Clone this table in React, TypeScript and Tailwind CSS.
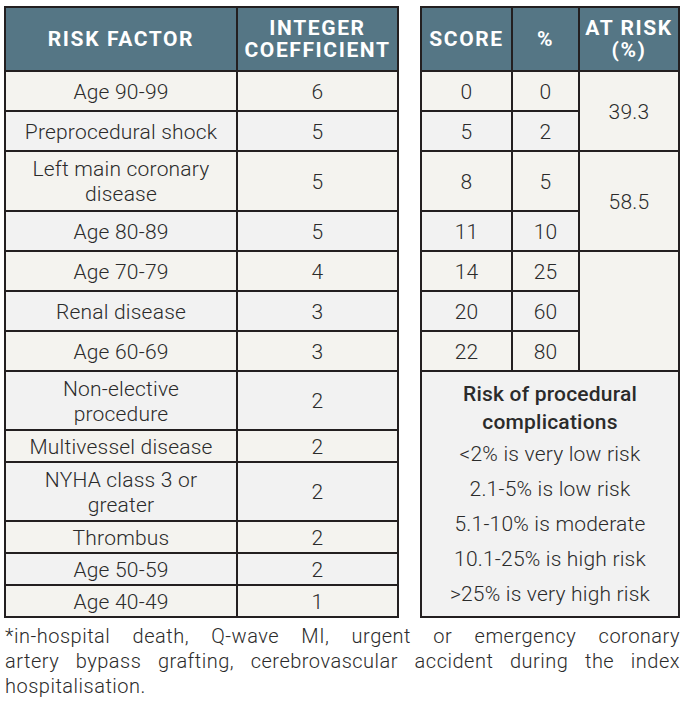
import React from 'react'

const factors = [
    { name: 'Age 90-99', coef: 6, h: 'h-[40px]' },
    { name: 'Preprocedural shock', coef: 5, h: 'h-[40px]' },
    { name: 'Left main coronary disease', coef: 5, h: 'h-[60px]' },
    { name: 'Age 80-89', coef: 5, h: 'h-[40px]' },
    { name: 'Age 70-79', coef: 4, h: 'h-[40px]' },
    { name: 'Renal disease', coef: 3, h: 'h-[40px]' },
    { name: 'Age 60-69', coef: 3, h: 'h-[40px]' },
    { name: 'Non-elective procedure', coef: 2, h: 'h-[59px]' },
    { name: 'Multivessel disease', coef: 2, h: 'h-[32px]' },
    { name: 'NYHA class 3 or greater', coef: 2, h: 'h-[59px]' },
    { name: 'Thrombus', coef: 2, h: 'h-[32px]' },
    { name: 'Age 50-59', coef: 2, h: 'h-[32px]' },
    { name: 'Age 40-49', coef: 1, h: 'h-[32px]' },
]

const cell = 'border-2 border-[#231f20] text-center align-middle px-4 pt-[2px] leading-[25px]'
const head = 'border-2 border-[#231f20] bg-[#557685] text-white font-bold tracking-[1.6px] text-center leading-[22px] text-[21px]'

const App = () => {
    return (
        <div className="w-[690px] h-[709px] bg-white text-[#2b2b2b] text-[21px] tracking-[0.2px] font-['Roboto',sans-serif] font-light">
            <div className="flex gap-[21px] pt-[6px] pl-[4px]">
                <table className="border-collapse w-[395px] table-fixed">
                    <thead>
                        <tr className="h-[64px]">
                            <th className={head + ' w-[232px]'}>RISK FACTOR</th>
                            <th className={head}>INTEGER COEFFICIENT</th>
                        </tr>
                    </thead>
                    <tbody>
                        {factors.map((f, i) => (
                            <tr key={f.name} className={f.h + (i % 2 === 0 ? ' bg-[#f4f3ef]' : ' bg-[#f2f2f2]')}>
                                <td className={cell}>{f.name}</td>
                                <td className={cell}>{f.coef}</td>
                            </tr>
                        ))}
                    </tbody>
                </table>

                <table className="border-collapse w-[260px] table-fixed">
                    <thead>
                        <tr className="h-[64px]">
                            <th className={head + ' w-[91px]'}>SCORE</th>
                            <th className={head + ' w-[67px]'}>%</th>
                            <th className={head}>AT RISK (%)</th>
                        </tr>
                    </thead>
                    <tbody>
                        <tr className="h-[40px] bg-[#f4f3ef]">
                            <td className={cell}>0</td>
                            <td className={cell}>0</td>
                            <td className={cell + ' bg-[#f4f3ef]'} rowSpan={2}>39.3</td>
                        </tr>
                        <tr className="h-[40px] bg-[#f2f2f2]">
                            <td className={cell}>5</td>
                            <td className={cell}>2</td>
                        </tr>
                        <tr className="h-[60px] bg-[#f4f3ef]">
                            <td className={cell}>8</td>
                            <td className={cell}>5</td>
                            <td className={cell + ' bg-[#f4f3ef]'} rowSpan={2}>58.5</td>
                        </tr>
                        <tr className="h-[40px] bg-[#f2f2f2]">
                            <td className={cell}>11</td>
                            <td className={cell}>10</td>
                        </tr>
                        <tr className="h-[40px] bg-[#f4f3ef]">
                            <td className={cell}>14</td>
                            <td className={cell}>25</td>
                            <td className={cell + ' bg-[#f4f3ef]'} rowSpan={3}></td>
                        </tr>
                        <tr className="h-[40px] bg-[#f2f2f2]">
                            <td className={cell}>20</td>
                            <td className={cell}>60</td>
                        </tr>
                        <tr className="h-[40px] bg-[#f4f3ef]">
                            <td className={cell}>22</td>
                            <td className={cell}>80</td>
                        </tr>
                        <tr className="h-[245px] bg-[#f2f2f2]">
                            <td className="border-2 border-[#231f20] text-center align-top pt-[8px]" colSpan={3}>
                                <div className="font-medium leading-[28px]">Risk of procedural<br />complications</div>
                                <div className="leading-[35px] mt-[1px]">
                                    <div>&lt;2% is very low risk</div>
                                    <div>2.1-5% is low risk</div>
                                    <div>5.1-10% is moderate</div>
                                    <div>10.1-25% is high risk</div>
                                    <div>&gt;25% is very high risk</div>
                                </div>
                            </td>
                        </tr>
                    </tbody>
                </table>
            </div>
            <p className="ml-[5px] mr-[10px] mt-[6px] text-[20px] tracking-[0.5px] leading-[25px] text-justify">
                *in-hospital death, Q-wave MI, urgent or emergency coronary artery&nbsp;bypass grafting, cerebrovascular accident during the index hospitalisation.
            </p>
        </div>
    )
}

export default App
